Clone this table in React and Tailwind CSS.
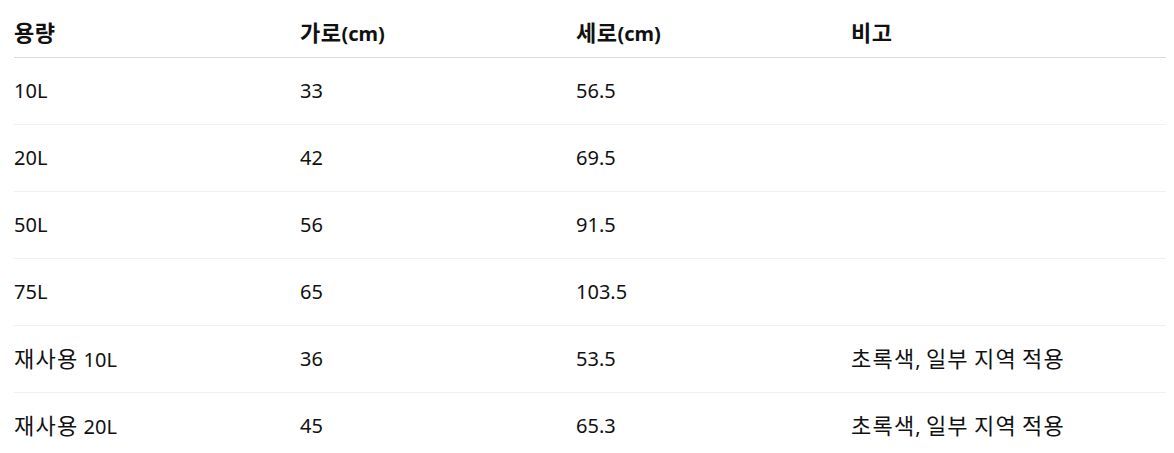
import React from 'react';

const rows = [
  ['10L', '33', '56.5', ''],
  ['20L', '42', '69.5', ''],
  ['50L', '56', '91.5', ''],
  ['75L', '65', '103.5', ''],
  ['재사용 10L', '36', '53.5', '초록색, 일부 지역 적용'],
  ['재사용 20L', '45', '65.3', '초록색, 일부 지역 적용'],
];

const headers = ['용량', '가로(cm)', '세로(cm)', '비고'];

// hangul runs get their own size so they sit like the original Korean face
const Txt = ({ text, bold }) =>
  text.split(/([가-힣]+)/).map((part, i) =>
    /[가-힣]/.test(part) ? (
      <span key={i} className={bold ? 'text-[22px] tracking-[0.5px]' : 'text-[22px] tracking-[1.2px]'}>
        {part}
      </span>
    ) : (
      <span key={i}>{part}</span>
    )
  );

const App = () => {
  return (
    <div
      className="bg-white px-[14px] pt-[10px] text-[20px] text-[#111]"
      style={{ fontFamily: '"Noto Sans", "Noto Sans CJK KR", sans-serif' }}
    >
      <table className="w-[1152px] table-fixed border-collapse text-left">
        <colgroup>
          <col className="w-[286px]" />
          <col className="w-[276px]" />
          <col className="w-[275px]" />
          <col className="w-[315px]" />
        </colgroup>
        <thead>
          <tr className="border-b border-[#dcdcdc]">
            {headers.map((h, i) => (
              <th key={i} className="h-[47px] p-0 font-bold leading-6">
                <Txt text={h} bold />
              </th>
            ))}
          </tr>
        </thead>
        <tbody>
          {rows.map((row, i) => (
            <tr key={i} className={i < rows.length - 1 ? 'border-b border-[#f0f0f0]' : ''}>
              {row.map((cell, j) => (
                <td key={j} className="h-[67px] p-0 font-normal leading-6">
                  <Txt text={cell} />
                </td>
              ))}
            </tr>
          ))}
        </tbody>
      </table>
    </div>
  );
};

export default App;
